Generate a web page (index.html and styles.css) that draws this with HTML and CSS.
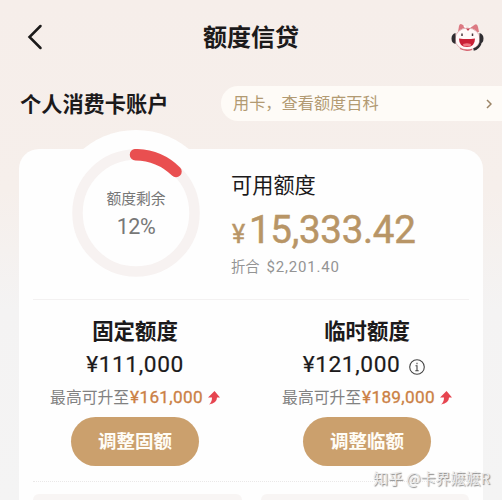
FILE: index.html
```html
<!DOCTYPE html>
<html lang="zh-CN">
<head>
<meta charset="utf-8">
<title>额度信贷</title>
<link rel="stylesheet" href="styles.css">
</head>
<body>
<div class="page">
  <header class="nav">
    <svg class="back" viewBox="0 0 16 26"><path d="M13.5 2 2.5 13l11 11"/></svg>
    <h1>额度信贷</h1>
    <svg class="mascot" viewBox="0 0 34 30">
      <path d="M8 9 9 3Q10-1 14 3l2 2h4l3-2q4-4 5 1l1 5z" fill="#dc7982"/>
      <path d="M14 3l3 3 4-3" fill="none" stroke="#fff" stroke-width="1.500"/>
      <ellipse cx="17.500" cy="16" rx="12.500" ry="11" fill="#fff8f8" stroke="#e2b3b6"/>
      <path d="M16 5.500h4l-2 2.500z" fill="#c64453"/>
      <path d="M5.500 10q-4 1-4 5.500t4 5.500zM29.500 10q4 1 4 5.500t-4 5.500z" fill="#2f2d31"/>
      <path d="M30.500 20q-2 5.500-7 6.500" fill="none" stroke="#2f2d31" stroke-width="2.400"/>
      <path d="M12 10.500v2.500M22.500 10.500v2.500" stroke="#49363a" stroke-width="1.500"/>
      <path d="M9 15.500q8 1 16 0 0 8.500-8 8.500t-8-8.500z" fill="#c91f35"/>
      <ellipse cx="17" cy="21.800" rx="4" ry="1.500" fill="#ef7680"/>
      <path d="M10 25.500q6 3 12 .8" fill="none" stroke="#d66570" stroke-width="1.300"/>
    </svg>
  </header>
  <div class="account">
    <h2>个人消费卡账户</h2>
    <div class="tip"><span>用卡，查看额度百科</span>
      <svg viewBox="0 0 6 10"><path d="m1 1 4 4-4 4"/></svg>
    </div>
  </div>
  <main class="card">
    <section class="overview">
      <div class="gauge">
        <svg class="ring" viewBox="0 0 128 128">
          <circle cx="64" cy="64" r="58.500"/>
          <path d="M63.500 5.700A58.500 58.500 0 0 1 104 22.500"/>
        </svg>
        <div class="gauge-text"><span>额度剩余</span><b>12%</b></div>
      </div>
      <div class="available">
        <div class="label">可用额度</div>
        <div class="total"><small>¥</small><span>15,333.42</span></div>
        <div class="usd"><span>折合</span><span class="dollars">$2,201.40</span></div>
      </div>
    </section>
    <section class="limits">
      <div class="limit">
        <h3>固定额度</h3>
        <div class="amount"><span>¥111,000</span></div>
        <div class="raise">最高可升至<b>¥161,000</b><svg viewBox="0 0 12 14"><path d="M6.500 0 12 6.500H9Q9 12 1 13.500q3-2.500 3-7H0z"/></svg></div>
        <button>调整固额</button>
      </div>
      <div class="limit">
        <h3>临时额度</h3>
        <div class="amount"><span>¥121,000</span><svg class="info" viewBox="0 0 16 16"><circle cx="8" cy="8" r="7.300"/><path d="M6.500 6.800H8v5M6.300 11.800h3.400M8 3.700v1.600"/></svg></div>
        <div class="raise">最高可升至<b>¥189,000</b><svg viewBox="0 0 12 14"><path d="M6.500 0 12 6.500H9Q9 12 1 13.500q3-2.500 3-7H0z"/></svg></div>
        <button>调整临额</button>
      </div>
    </section>
    <section class="tiles"><i></i><i></i></section>
  </main>
  <div class="watermark">知乎 @卡界嬷嬷R</div>
</div>
</body>
</html>
```
FILE: styles.css
```css
* { box-sizing: border-box; }
body { margin: 0; font-family: Roboto, "Noto Sans CJK SC", sans-serif; color: #1c1a1b; }
h1, h2, h3 { margin: 0; font-family: "Noto Sans CJK SC", sans-serif; font-weight: 700; }
.page {
  position: relative; width: 502px; height: 500px; overflow: hidden;
  display: flex; flex-direction: column; white-space: nowrap;
  background: linear-gradient(#f6eeea 0, #f6efeb 190px, #f4f3f3 310px, #f4f4f4 100%);
}
.nav { height: 76px; display: grid; grid-template-columns: 60px 1fr 60px; align-items: center; }
.back { width: 16px; height: 26px; margin: 0 0 2px 27px; fill: none; stroke: #1b1a1a; stroke-width: 2.5; stroke-linecap: round; }
.nav h1 { padding-bottom: 4px; font-size: 24px; line-height: 72px; text-align: center; }
.mascot { width: 34px; height: 30px; margin-left: 8px; }
.account { height: 73px; display: flex; align-items: flex-start; padding-left: 20px; }
.account h2 { width: 201px; padding-top: 8px; font-size: 21.2px; line-height: 38px; }
.tip {
  flex: 1; height: 35px; margin-top: 10px; padding: 0 10px 0 12px; border-radius: 17px 0 0 17px;
  background: #fefbf7; color: #b29a72; font-size: 16.2px; line-height: 34px;
  display: flex; justify-content: space-between; align-items: center;
}
.tip svg { width: 6px; height: 10px; fill: none; stroke: #9b8466; stroke-width: 1.5; }
.card { width: 464px; height: 351px; margin-left: 19px; border-radius: 20px 20px 0 0; background: #fefefe; display: flex; flex-direction: column; }
.overview { height: 151px; margin: 0 14px; border-bottom: 1px solid #f3f1f1; display: flex; }
.gauge {
  width: 166px; height: 166px; margin: -19px 0 0 20px; border-radius: 50%; background: #fefefe;
  display: grid; place-items: center;
}
.gauge > * { grid-area: 1 / 1; }
.ring { width: 128px; height: 128px; fill: none; }
.ring circle { stroke: #f7f2f1; stroke-width: 10.5; }
.ring path { stroke: #e94f50; stroke-width: 11.5; stroke-linecap: round; }
.gauge-text { display: flex; flex-direction: column; align-items: center; color: #777; font-size: 14.8px; line-height: 24px; padding-top: 4px; }
.gauge-text b { font-size: 21.5px; line-height: 32px; font-weight: 400; letter-spacing: -.4px; }
.available { padding: 20px 0 0 12px; }
.label { font-size: 21.2px; line-height: 34px; }
.total { display: flex; align-items: baseline; height: 49px; line-height: 53px; color: #b89566; font-size: 38.5px; -webkit-text-stroke: .5px #b89566; }
.total small { width: 18px; padding-left: 1px; font-size: 25px; }
.total span { letter-spacing: -.3px; }
.usd { display: flex; gap: 7px; color: #949494; font-size: 14.3px; line-height: 30px; }
.dollars { font-size: 15px; letter-spacing: .8px; }
.limits { height: 182px; margin: 0 14px; display: grid; grid-template-columns: 204px 1fr; border-bottom: 1px dotted #eae8e8; }
.limit { display: flex; flex-direction: column; align-items: center; padding-top: 13px; }
.limit + .limit { padding-left: 36px; padding-right: 8px; }
.limit h3 { font-size: 21.4px; line-height: 34px; }
.amount { height: 36px; display: flex; align-items: center; font-size: 22.7px; line-height: 36px; letter-spacing: .6px; -webkit-text-stroke: .2px #1c1a1b; }
.info { width: 16px; height: 16px; margin: 3px 0 0 9px; fill: none; stroke: #444; stroke-width: 1.1; }
.limit + .limit .amount { padding-right: 6px; }
.raise { height: 34px; padding-bottom: 5px; display: flex; align-items: center; font-size: 15.8px; line-height: 29px; color: #818181; }
.raise b { margin-left: 1px; color: #cb8045; font-size: 17.2px; font-weight: 400; letter-spacing: .3px; -webkit-text-stroke: .3px #cb8045; }
.raise svg { width: 12px; height: 14px; margin-left: 5px; fill: #e64550; }
.limit button {
  width: 128px; height: 49px; padding: 0 0 2px; border: 0; border-radius: 25px; background: #cba06d;
  color: #fffdf7; font: 700 18.5px/47px "Noto Sans CJK SC", sans-serif;
}
.tiles { flex: 1; display: grid; grid-template-columns: 1fr 1fr; gap: 19px; padding: 12px 14px 0; }
.tiles i { background: #f8f5f4; border-radius: 12px 12px 0 0; }
.watermark {
  position: absolute; left: 373px; top: 466px; font: 400 15px/24px "Noto Sans CJK SC", sans-serif;
  color: #ececec; text-shadow: 1px 1px 1px #888; 
}
```
